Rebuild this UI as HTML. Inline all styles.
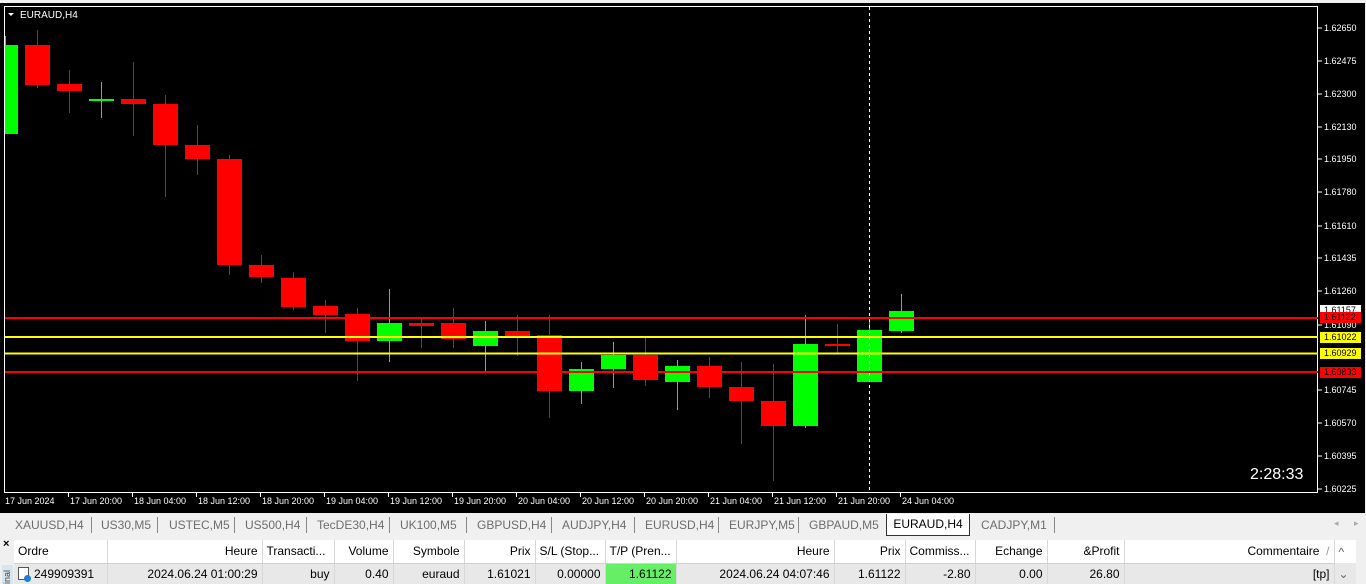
<!DOCTYPE html>
<html><head><meta charset="utf-8"><style>
*{margin:0;padding:0;box-sizing:border-box}
body{width:1366px;height:584px;overflow:hidden;background:#f0f0f0;font-family:"Liberation Sans",sans-serif;position:relative}
#chart{position:absolute;left:0;top:3px;width:1365px;height:510px;background:#000}
.tabs{position:absolute;left:0;top:513px;width:1366px;height:25px;background:#f0f0f0;font-size:12px;color:#6d6d6d}
.tabs span{position:absolute;top:5px;white-space:nowrap}
.sep{position:absolute;top:4px;width:1px;height:16px;background:#888}
.act{position:absolute;left:886px;top:1px;width:84px;height:22px;border:1px solid #333;border-top:none;background:#fff;color:#000;text-align:center;line-height:20px}
table{position:absolute;left:14px;top:540px;border-collapse:collapse;font-size:12px}
td{height:23px;padding:0 4px;border-right:1px solid #d8d8d8;white-space:nowrap}
tr.h td{background:#fff;border-bottom:1px solid #d0d0d0}
tr.d td{background:#e8e8e8;height:21px}
.r{text-align:right}
</style></head><body>
<div id="chart">
<svg width="1365" height="510" xmlns="http://www.w3.org/2000/svg" style="position:absolute;left:0;top:0">
<rect x="4.5" y="3.5" width="1313" height="486" fill="none" stroke="#fff" stroke-width="1"/>
<polygon points="8,10 14,10 11,13" fill="#fff"/>
<text x="20" y="15" fill="#fff" font-size="10" font-family="Liberation Sans">EURAUD,H4</text>
<g id="c"></g>
<line x1="5" y1="315" x2="1318" y2="315" stroke="#f00" stroke-width="2"/>
<line x1="5" y1="334" x2="1318" y2="334" stroke="#ff0" stroke-width="2"/>
<line x1="5" y1="350.5" x2="1318" y2="350.5" stroke="#ff0" stroke-width="2"/>
<line x1="5" y1="369" x2="1318" y2="369" stroke="#f00" stroke-width="2"/>
<line x1="869.5" y1="4" x2="869.5" y2="489" stroke="#fff" stroke-dasharray="3,3"/>
<text x="1250" y="476" fill="#fff" font-size="16" font-family="Liberation Sans">2:28:33</text>
<g font-size="9" fill="#fff" font-family="Liberation Sans" id="pl"></g>
<g font-size="9" fill="#fff" font-family="Liberation Sans" id="tl"></g>
</svg>
</div>
<div class="tabs">
<span style="left:15px">XAUUSD,H4</span><div class="sep" style="left:91px"></div>
<span style="left:101px">US30,M5</span><div class="sep" style="left:157px"></div>
<span style="left:169px">USTEC,M5</span><div class="sep" style="left:234px"></div>
<span style="left:245px">US500,H4</span><div class="sep" style="left:306px"></div>
<span style="left:317px">TecDE30,H4</span><div class="sep" style="left:389px"></div>
<span style="left:400px">UK100,M5</span><div class="sep" style="left:466px"></div>
<span style="left:477px">GBPUSD,H4</span><div class="sep" style="left:551px"></div>
<span style="left:562px">AUDJPY,H4</span><div class="sep" style="left:634px"></div>
<span style="left:645px">EURUSD,H4</span><div class="sep" style="left:718px"></div>
<span style="left:729px">EURJPY,M5</span><div class="sep" style="left:798px"></div>
<span style="left:809px">GBPAUD,M5</span>
<div class="act">EURAUD,H4</div>
<span style="left:981px">CADJPY,M1</span><div class="sep" style="left:1054px"></div>
<span style="left:1334px;font-size:9px;color:#aaa">◂</span><span style="left:1354px;font-size:9px;color:#aaa">▸</span>
</div>
<div style="position:absolute;left:0;top:538px;width:14px;height:46px;background:#f0f0f0;font-size:11px;font-weight:bold;padding-left:3px">×</div>
<div style="position:absolute;left:2px;top:565px;width:11px;height:19px;background:#d8e4ee;font-size:9px;color:#444;writing-mode:vertical-rl;transform:rotate(180deg)">inal</div>
<table>
<tr class="h"><td style="width:93px">Ordre</td><td class="r" style="width:155px">Heure</td><td style="width:72px">Transacti...</td><td class="r" style="width:59px">Volume</td><td class="r" style="width:71px">Symbole</td><td class="r" style="width:71px">Prix</td><td style="width:70px">S/L (Stop...</td><td style="width:71px">T/P (Pren...</td><td class="r" style="width:158px">Heure</td><td class="r" style="width:71px">Prix</td><td style="width:70px">Commiss...</td><td class="r" style="width:72px">Echange</td><td class="r" style="width:77px">&amp;Profit</td><td class="r" style="width:210px">Commentaire &nbsp;<span style="color:#999">/</span></td><td style="width:22px;border:none;color:#666">^</td></tr>
<tr class="d"><td><span style="display:inline-block;width:11px;height:13px;border:1px solid #555;background:#fff;vertical-align:-2px;margin-right:5px;position:relative"><span style="position:absolute;right:-3px;bottom:-3px;width:7px;height:7px;border-radius:50%;background:#1a7fd6"></span></span>249909391</td><td class="r">2024.06.24 01:00:29</td><td class="r">buy</td><td class="r">0.40</td><td class="r">euraud</td><td class="r">1.61021</td><td class="r">0.00000</td><td class="r" style="background:#66ee66">1.61122</td><td class="r">2024.06.24 04:07:46</td><td class="r">1.61122</td><td class="r">-2.80</td><td class="r">0.00</td><td class="r">26.80</td><td class="r">[tp]</td><td style="border:none;color:#666">⌄</td></tr>
</table>
<script>
var C=[[1,45,134,36,134],[0,45,85,30,88],[0,84,91,70,113],[1,99,101,82,118],[0,99,104,62,136],[0,104,145,95,197],[0,145,159,125,175],[0,159,265,155,275],[0,265,277,255,283],[0,278,307,272,310],[0,306,315,300,333],[0,314,341,308,381],[1,323,341,289,362],[0,323,326,318,348],[0,323,339,308,348],[1,331,346,321,371],[0,331,336,315,356],[0,335,391,315,418],[1,369,391,362,404],[1,355,369,342,388],[0,355,380,338,386],[1,366,382,360,410],[0,366,387,357,398],[0,387,401,362,444],[0,401,426,364,481],[1,344,426,315,428],[0,344,345,324,353],[1,330,382,318,382],[1,311,331,294,333]];
var s='';C.forEach(function(c,i){var x=5+32*i;var col=c[0]?'#0f0':'#f00';var o=-3;
s+='<line x1="'+x+'.5" y1="'+(c[3]+o)+'" x2="'+x+'.5" y2="'+(c[4]+o)+'" stroke="'+col+'"/>';
var h=Math.max(c[2]-c[1],2);var l=i==0?5:x-12;var w=i==0?13:25;
s+='<rect x="'+l+'" y="'+(c[1]+o)+'" width="'+w+'" height="'+h+'" fill="'+col+'"/>';});
document.getElementById('c').innerHTML=s;
var P=[['1.62650',28],['1.62475',61],['1.62300',94],['1.62130',127],['1.61950',159],['1.61780',192],['1.61610',226],['1.61435',258],['1.61260',291],['1.61090',325],['1.60745',390],['1.60570',423],['1.60395',456],['1.60225',489]];
var p='';P.forEach(function(a){var y=a[1]-3;p+='<line x1="1318" y1="'+y+'" x2="1322" y2="'+y+'" stroke="#fff"/><text x="1324" y="'+(y+3)+'">'+a[0]+'</text>';});
var T=[['1.61157',310,'#fff','#000'],['1.61122',317,'#f00','#000'],['1.61022',337,'#ff0','#000'],['1.60929',353,'#ff0','#000'],['1.60833',372,'#f00','#000']];
T.forEach(function(a){var y=a[1]-3;p+='<rect x="1320" y="'+(y-5)+'" width="41" height="11" fill="'+a[2]+'"/><text x="1324" y="'+(y+3)+'" fill="'+a[3]+'">'+a[0]+'</text>';});
document.getElementById('pl').innerHTML=p;
var L=['17 Jun 2024','17 Jun 20:00','18 Jun 04:00','18 Jun 12:00','18 Jun 20:00','19 Jun 04:00','19 Jun 12:00','19 Jun 20:00','20 Jun 04:00','20 Jun 12:00','20 Jun 20:00','21 Jun 04:00','21 Jun 12:00','21 Jun 20:00','24 Jun 04:00'];
var t='';L.forEach(function(a,i){var x=4+64*i;if(i)t+='<line x1="'+x+'.5" y1="489" x2="'+x+'.5" y2="494" stroke="#fff"/>';t+='<text x="'+(i?x+2:5)+'" y="501">'+a+'</text>';});
document.getElementById('tl').innerHTML=t;
</script>
</body></html>
